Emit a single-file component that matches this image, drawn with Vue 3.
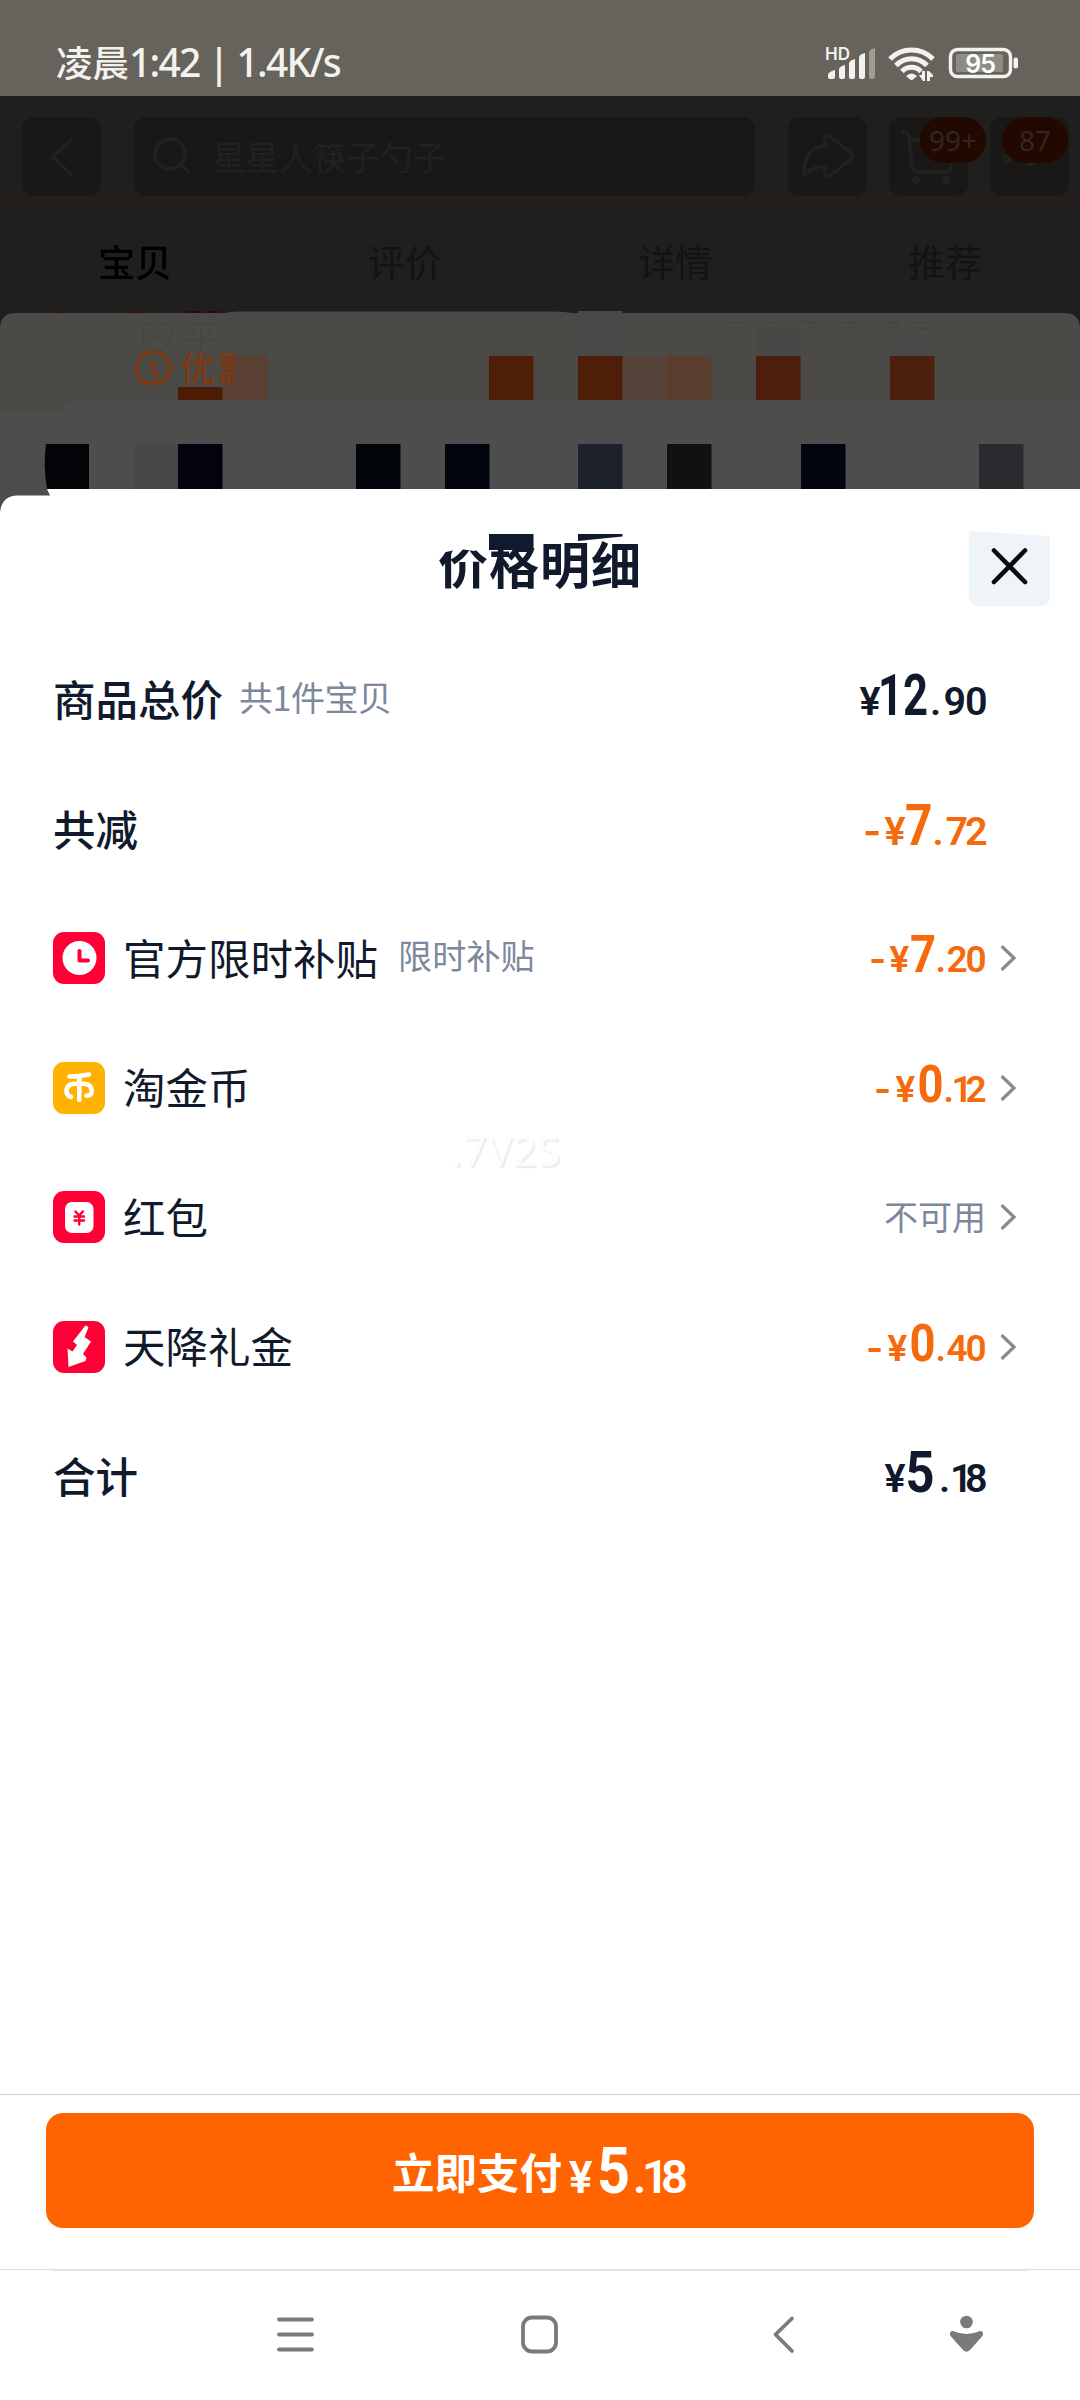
<script setup>
const tabs = ['宝贝', '评价', '详情', '推荐']

const cell = 44.5
// Blocks behind the sheet, in coordinates of a 1080x181 canvas
const blocks = [
  { x: 578, y: 3, h: 45, c: '#474a47' },
  { x: 756, y: 20, h: 28, c: '#464946' },
  { x: 890, y: 27, h: 21, c: '#494948' },
  { x: 178, y: 79, h: 13, c: '#4d1c05' },
  { x: 223, y: 48, h: 44, c: '#5a4033' },
  { x: 489, y: 48, h: 44, c: '#4f1e09' },
  { x: 578, y: 48, h: 44, c: '#4f1e09' },
  { x: 623, y: 48, h: 44, c: '#56443b' },
  { x: 667, y: 48, h: 44, c: '#593d2d' },
  { x: 756, y: 48, h: 44, c: '#4c1e0b' },
  { x: 890, y: 48, h: 44, c: '#4b200c' },
  { x: 134, y: 136, h: 45, c: '#484848' },
  { x: 178, y: 136, h: 45, c: '#02030d' },
  { x: 356, y: 136, h: 45, c: '#020509' },
  { x: 445, y: 136, h: 45, c: '#02050e' },
  { x: 578, y: 136, h: 45, c: '#1c212b' },
  { x: 667, y: 136, h: 45, c: '#101212' },
  { x: 801, y: 136, h: 45, c: '#02050d' },
  { x: 979, y: 136, h: 45, c: '#2b2a2f' }
]

// x holds the glyph offsets of each part inside the price box, w the width of the large digits
const rows = [
  { label: '商品总价', strong: true, note: '共1件宝贝', price: { s: ['¥', '12', '.90'], x: ['39.5', '58', '110 123.500 145'], w: 50, big: 57, small: 39.5, tone: 'dark', y: 65 } },
  { label: '共减', strong: true, price: { s: ['¥', '7', '.72'], x: ['64.5', '85', '112.500 125.500 145'], w: 27.5, minus: 43, big: 57, small: 39.5, tone: 'orange', y: 66 } },
  { label: '官方限时补贴', icon: 'clock', note: '限时补贴', arrow: true, price: { s: ['¥', '7', '.20'], x: ['69.5', '90', '115.500 126.500 145.500'], w: 26, minus: 49, big: 51, small: 37, tone: 'orange', y: 64 } },
  { label: '淘金币', icon: 'coin', arrow: true, price: { s: ['¥', '0', '.12'], x: ['75.5', '97.5', '123.500 131.500 145.500'], w: 26, minus: 54, big: 51, small: 37, tone: 'orange', y: 64 } },
  { label: '红包', icon: 'packet', arrow: true, text: '不可用' },
  { label: '天降礼金', icon: 'bolt', arrow: true, price: { s: ['¥', '0', '.40'], x: ['67.5', '89.5', '115.500 126.500 145.500'], w: 26, minus: 46, big: 51, small: 37, tone: 'orange', y: 64 } },
  { label: '合计', strong: true, price: { s: ['¥', '5', '.18'], x: ['64.5', '85.5', '119 130 145'], w: 29, big: 57, small: 39.5, tone: 'dark', y: 66 } }
]
</script>

<template>
  <div class="screen">
    <header class="status">
      <span class="time">凌晨<i>1:42 | 1.4K/s</i></span>
      <svg class="tray" width="200" height="40" viewBox="0 0 200 40">
        <text x="0" y="17" class="hd">HD</text>
        <g fill="#f4f2ee">
          <path d="M3 34a2 2 0 0 0 2 2h3a2 2 0 0 0 2-2v-7q-7 2-7 5z" />
          <path d="M14 26q1-3 6-4v12a2 2 0 0 1-2 2h-2a2 2 0 0 1-2-2z" />
          <path d="M24 20q1-3 6-4v18a2 2 0 0 1-2 2h-2a2 2 0 0 1-2-2z" />
          <path d="M34 14q1-3 6-4v24a2 2 0 0 1-2 2h-2a2 2 0 0 1-2-2z" />
          <path d="M44 9q1-3 6-4v29a2 2 0 0 1-2 2h-2a2 2 0 0 1-2-2z" opacity=".4" />
        </g>
        <g fill="none" stroke="#f4f2ee" stroke-width="5">
          <path d="M65 16a30 30 0 0 1 43 0" />
          <path d="M71 22.500a21 21 0 0 1 31 0" />
          <path d="M77 28.500a13 13 0 0 1 19 0" />
        </g>
        <path d="M81 33q5.500-5 11 0l-4 3.500q-1.500 1-3 0z" fill="#f4f2ee" />
        <path d="M94 32h3v-4h3v10h-2zM102 38v-10h2l4 4v2h-3v4z" fill="#f4f2ee" />
        <rect x="125.500" y="6.500" width="60" height="27" rx="7" fill="none" stroke="#f4f2ee" stroke-width="3.400" />
        <rect x="131" y="11" width="47" height="18" rx="1.500" fill="#8f8c86" />
        <rect x="188.500" y="14.500" width="4.500" height="11" rx="2" fill="#f4f2ee" />
        <text x="155" y="29.500" text-anchor="middle" class="pct">95</text>
      </svg>
    </header>

    <section class="behind">
      <nav class="bar">
        <div class="btn">
          <svg width="79" height="79" viewBox="0 0 79 79"><path d="M49 23L31 40l18 17" /></svg>
        </div>
        <div class="search">
          <svg width="40" height="40" viewBox="0 0 40 40"><circle cx="18" cy="19" r="15" /><path d="M28 29l9 8" /></svg>
          <span>星星人筷子勺子</span>
        </div>
        <div class="btn">
          <svg width="79" height="79" viewBox="0 0 79 79"><path d="M37 28v-6q1-5 6-2l20 16q3 3 0 6L43 58q-5 3-6-2v-6q-12-2-21 9q-1-27 21-31z" /></svg>
        </div>
        <div class="btn cart">
          <svg width="79" height="79" viewBox="0 0 79 79"><path d="M14 15q5 0 6 5l3 30q1 5 6 5h28q4 0 5-5l2-27H22" /><circle cx="27" cy="63" r="2.500" /><circle cx="57" cy="63" r="2.500" /></svg>
          <b class="badge">99+</b>
        </div>
        <div class="btn more">
          <svg width="79" height="79" viewBox="0 0 79 79"><circle cx="17" cy="42" r="3" /><path d="M38 47h6" /></svg>
          <b class="badge">87</b>
        </div>
      </nav>
      <div class="tabs">
        <span v-for="(t, i) in tabs" :key="t" :class="{ on: i === 0 }">{{ t }}</span>
      </div>
      <svg class="mosaic" width="1080" height="181" viewBox="0 0 1080 181">
        <rect width="1080" height="181" fill="#1f1f1f" />
        <g fill="#2e160c">
          <path d="M51 3h13v2H51zM71 3h2v3h-2zM80 3h2v3h-2zM88 3h2v3h-2zM96 3h2v3h-2zM105 3h2v3h-2zM122 3h25v2h-25zM155 3h3v3h-3z" />
          <path d="M186 3h14v3h-14zM206 3h14v3h-14z" fill="#30060f" />
        </g>
        <path d="M0 21Q0 5 16 5H226Q230 3.500 240 3.500H555Q568 4 572 5H1064Q1080 5 1080 21V181H0z" fill="#4c4a47" />
        <path d="M0 103H62Q68 92 80 92H1080V181H0z" fill="#4d4d4d" />
        <g class="faint">
          <path d="M157 14l14 4v12q0 8-14 13q-14-5-14-13v-12zM151 27l5 5 8-9" fill="none" stroke="#464645" stroke-width="2" />
          <text x="184" y="42" font-size="34">平</text>
        </g>
        <path d="M724 15h24M762 15h20M800 14h20M838 15h20M872 14h6M885 14h16M908 15h26M728 21h4M808 19h10M845 19h12M888 19h12M915 21h18" stroke="#484644" stroke-width="2" />
        <rect v-for="(b, i) in blocks" :key="i" :x="b.x" :y="b.y" :width="cell" :height="b.h" :fill="b.c" />
        <path d="M46 136H89v45H47Q43 158 46 136z" fill="#060308" />
        <g class="deal">
          <path d="M146 75a16.500 16.500 0 1 1 15 0z" />
          <path d="M153 53v8q1 5 5 8" />
        </g>
        <svg x="176" y="43" width="58" height="38" viewBox="176 43 58 38">
          <text x="180 217" y="73.500" font-size="35" fill="#873709">优惠</text>
        </svg>
      </svg>
    </section>

    <main class="sheet">
      <svg class="edge" width="52" height="24" viewBox="0 0 52 24"><path d="M0 0H47L50 6.500H16Q2 7.500 0 23z" fill="#4d4d4d" /></svg>
      <div class="head">
        <h1>价格明细
          <svg width="204" height="62" viewBox="0 0 204 62">
            <path d="M0 0H51V18L42 19 36 21 22 19 8 22 0 22z" fill="#fff" />
            <path d="M51 4H95.500V20H51z" />
            <path d="M140 4H184.500V6.500L140 11z" />
          </svg>
        </h1>
        <button class="close">
          <svg width="82" height="76" viewBox="0 0 82 76">
            <path d="M0 0L81 5V65q0 10-10 10H10Q0 75 0 65z" fill="#eff4f8" />
            <path d="M25 19.500L56 51M56 19.500L25 51" stroke="#0b0b0d" stroke-width="4.600" stroke-linecap="round" />
          </svg>
        </button>
      </div>

      <ul class="rows">
        <li v-for="r in rows" :key="r.label">
          <svg v-if="r.icon" class="ico" width="52" height="52" viewBox="0 0 52 52">
            <rect width="52" height="52" rx="11" :fill="r.icon === 'coin' ? '#ffb200' : '#ff0036'" />
            <template v-if="r.icon === 'clock'">
              <circle cx="26.500" cy="26" r="17" fill="#fff" />
              <path d="M26.500 19v9.500h8.500" fill="none" stroke="#ff0036" stroke-width="4" stroke-linecap="round" stroke-linejoin="round" />
            </template>
            <g v-else-if="r.icon === 'coin'" fill="none" stroke="#fff" stroke-width="4.600" stroke-linecap="round" stroke-linejoin="round">
              <path d="M16.500 14.500Q26 14.500 36 12.500M26.300 14v24M26.300 21.800H20.500q-6.500 1-7 6.700q0 5 4.500 6.500M26.300 21.800H32q6.500 1 6.800 7q0 5-5.300 5" />
            </g>
            <g v-else-if="r.icon === 'packet'">
              <rect x="12" y="11" width="28.500" height="31" rx="7" fill="#fff" />
              <path d="M22.500 20.500l3.700 4 3.700-4M26.200 24.500v9M21.500 25.500h9.500M21.500 29.500h9.500" fill="none" stroke="#ff0036" stroke-width="2.400" stroke-linecap="round" />
            </g>
            <path v-else d="M32 5q.7-1 2 0l1.500 1.500L31.500 16l6.500 4.500L30 33l3.500 3.500-1 3.500L15.500 46l-1-18.500 5 3L24 24l-4-3.500z" fill="#fff" />
          </svg>
          <span class="label" :class="{ strong: r.strong }">{{ r.label }}</span>
          <span v-if="r.note" class="note" :class="{ wide: r.icon }">{{ r.note }}</span>
          <span v-if="r.text" class="off">{{ r.text }}</span>
          <svg v-else class="price" :class="r.price.tone" width="180" height="100" viewBox="0 0 180 100">
            <text :y="r.price.y"><tspan v-if="r.price.minus" class="minus" :x="r.price.minus" :font-size="r.price.small">-</tspan><tspan :x="r.price.x[0]" :font-size="r.price.small">{{ r.price.s[0] }}</tspan><tspan class="big" :x="r.price.x[1]" :font-size="r.price.big" :textLength="r.price.w" lengthAdjust="spacingAndGlyphs">{{ r.price.s[1] }}</tspan><tspan :x="r.price.x[2]" :font-size="r.price.small">{{ r.price.s[2] }}</tspan></text>
          </svg>
          <svg class="arrow" width="17" height="28" viewBox="0 0 17 28"><path v-if="r.arrow" d="M2.500 3l11.500 11L2.500 25" /></svg>
        </li>
      </ul>
      <span class="mark">.7V2S</span>
    </main>

    <footer class="pay">
      <button class="cta">
        <span>立即支付</span>
        <svg width="126" height="110" viewBox="0 0 126 110">
          <text y="77"><tspan x="7" font-size="44">¥</tspan><tspan class="big" x="35" font-size="65" textLength="33" lengthAdjust="spacingAndGlyphs">5</tspan><tspan x="71 80 99" font-size="47">.18</tspan></text>
        </svg>
      </button>
    </footer>

    <nav class="keys">
      <svg width="1080" height="130" viewBox="0 0 1080 130">
        <path d="M0 .5H1080" stroke="#dedede" />
        <path d="M53 1H1027" stroke="#e2e2e2" stroke-width="2" />
        <g fill="none" stroke="#7a7a7a" stroke-width="3.800" stroke-linecap="round" stroke-linejoin="round">
          <path d="M279 50.500h33M279 65.500h33M279 80.500h33" />
          <rect x="523" y="48.500" width="33" height="34" rx="9" />
          <path d="M792 49.500L775.500 65.500 792 82" />
        </g>
        <circle cx="966.500" cy="53" r="6.300" fill="#7a7a7a" />
        <path d="M953 62q13.500 6 27 0c3-.5 4 3 2 5.500L970 81q-3.500 3.500-7 0L951 67.500c-2-2.500-1-6 2-5.500z" fill="#7a7a7a" />
      </svg>
    </nav>
  </div>
</template>

<style>
body { margin: 0; background: #fff; }
</style>

<style scoped>
.screen {
  width: 1080px;
  height: 2400px;
  overflow: hidden;
  display: flex;
  flex-direction: column;
  background: #fff;
  color: #111a2c;
  font-family: "Noto Sans CJK SC", "Noto Sans", sans-serif;
}
svg { display: block; flex: none; }
button { border: 0; padding: 0; background: none; font: inherit; }
.status {
  height: 96px;
  flex: none;
  box-sizing: border-box;
  padding: 0 55px 0 56px;
  display: flex;
  justify-content: space-between;
  align-items: flex-start;
  background: #66635d;
  color: #f4f2ee;
}
.time { margin-top: 35px; font-size: 36.500px; line-height: 54px; font-weight: 500; white-space: pre; }
.time i { font-style: normal; font-family: "Noto Sans", sans-serif; font-size: 39px; font-weight: 500; letter-spacing: -1.700px; }
.tray { margin-top: 43px; }
.hd { font: 600 17px Inter, sans-serif; fill: #f4f2ee; }
.pct { font: 600 25px Inter, sans-serif; fill: #fff; letter-spacing: -1px; }

.behind { flex: none; height: 393px; background: #1f1f1f; display: flex; flex-direction: column; }
.bar {
  height: 120px;
  box-sizing: border-box;
  padding: 21px 0 0 22px;
  display: flex;
  background: linear-gradient(#201f1d 0 100px, #221e1a 109px 114px, #1f1f1f 120px);
}
.btn { position: relative; width: 79px; height: 79px; border-radius: 12px; background: #191816; margin-left: 33px; flex: none; }
.btn:first-child { margin-left: 0; }
.cart, .more { margin-left: 22px; }
.bar svg { fill: none; stroke: #21211f; stroke-width: 3.500; stroke-linecap: round; stroke-linejoin: round; }
.search {
  width: 621px;
  height: 79px;
  flex: none;
  box-sizing: border-box;
  margin-left: 33px;
  padding: 0 0 3px 18px;
  display: flex;
  align-items: center;
  gap: 20px;
  border-radius: 12px;
  background: #191816;
  color: #21211f;
  font-size: 33.500px;
}
.badge {
  position: absolute;
  top: 0;
  left: 31px;
  width: 66px;
  height: 46px;
  border-radius: 23px;
  background: #210900;
  color: #32261f;
  text-align: center;
  font: 400 28px/46px "Noto Sans", sans-serif;
}
.more .badge { left: 12px; }
.tabs { height: 92px; display: flex; font-size: 37px; line-height: 90px; color: #131313; }
.tabs span { flex: 1; text-align: center; }
.tabs .on { color: #000; font-weight: 500; }
.faint text { fill: #464645; }
.deal path { fill: none; stroke: #873709; stroke-width: 3; stroke-linecap: round; }

.sheet { position: relative; flex: none; height: 1605px; background: #fff; }
.edge { position: absolute; left: 0; top: 0; }
.head { height: 146px; display: flex; justify-content: center; }
h1 { position: relative; margin: 35px 0 0; width: 204px; font-size: 50px; line-height: 76px; font-weight: 700; letter-spacing: 1px; white-space: nowrap; }
h1 svg { position: absolute; left: 0; top: 6px; fill: #111a2c; }
.close { position: absolute; right: 29px; top: 42px; }
.rows { list-style: none; margin: 0; padding: 0 63px 0 53px; }
.rows li { height: 129.400px; display: flex; align-items: center; }
.ico { margin-right: 18px; }
.label { font-size: 42.500px; line-height: 60px; padding-bottom: 3px; white-space: nowrap; }
.label.strong { font-weight: 500; }
.note { margin-left: 16px; padding-bottom: 6px; letter-spacing: -.5px; }
.note.wide { margin-left: 20px; letter-spacing: .2px; }
.note, .off { font-size: 34px; line-height: 48px; color: #7c889c; white-space: nowrap; }
.off { margin: 0 14px 0 auto; padding-bottom: 2px; }
.price { margin-left: auto; }
.price text, .cta text { font-family: Roboto, sans-serif; font-weight: 600; }
.price .big, .cta .big { font-weight: 700; }
.price .minus { font-family: Inter, sans-serif; }
.dark { fill: #111a2c; }
.orange { fill: #f56a0c; }
.arrow path { fill: none; stroke: #888a93; stroke-width: 3.200; stroke-linecap: round; }
.mark { position: absolute; left: 451px; top: 633px; font: 400 41px/56px "Noto Sans", sans-serif; letter-spacing: 1px; color: #fdfdfd; text-shadow: 2px 2px 1px #ececec; }

.pay { flex: none; height: 175px; box-sizing: border-box; border-top: 1px solid #cbcbcb; padding: 18px 46px 0; }
.cta {
  width: 988px;
  height: 115px;
  border-radius: 17px;
  background: #ff6400;
  color: #fff;
  display: flex;
  align-items: center;
  justify-content: center;
  font-size: 42.500px;
  font-weight: 700;
}
.cta svg { fill: #fff; }
.keys { flex: none; height: 131px; }
</style>
